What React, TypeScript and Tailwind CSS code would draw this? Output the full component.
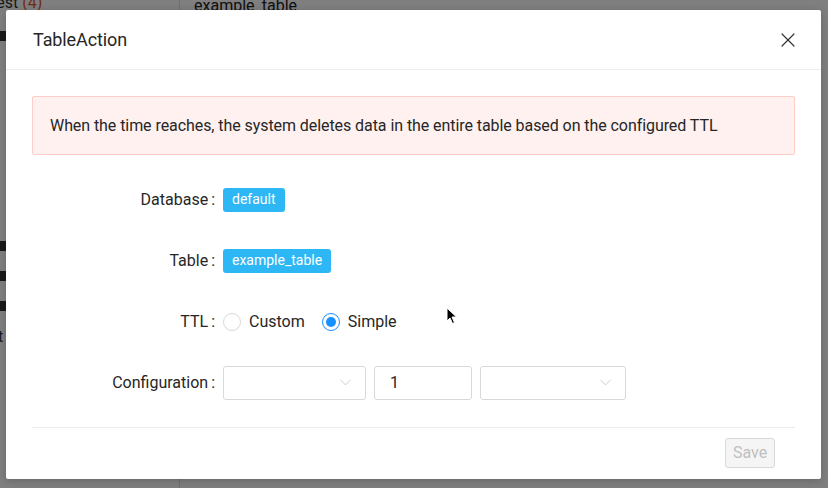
import React, { useState } from 'react';
import { X, ChevronDown } from 'lucide-react';

const font = { fontFamily: 'Roboto, "Liberation Sans", Arial, sans-serif' };

const FormRow: React.FC<{ label: string; children: React.ReactNode }> = ({ label, children }) => (
  <div className="flex items-center h-[61px]">
    <div className="w-[191px] shrink-0 flex justify-end pr-[8px] text-[16px] text-[#262626]">
      <span>{label}</span>
      <span className="ml-[3px]">:</span>
    </div>
    <div className="flex items-center">{children}</div>
  </div>
);

const Tag: React.FC<{ children: React.ReactNode }> = ({ children }) => (
  <span className="inline-flex items-center h-[24px] px-[9px] rounded-[3px] bg-[#2db7f5] text-white text-[14px]">
    {children}
  </span>
);

const Radio: React.FC<{ checked: boolean; label: string; onClick: () => void }> = ({ checked, label, onClick }) => (
  <label onClick={onClick} className="flex items-center mr-[17px] cursor-pointer">
    <span
      className={`w-[18px] h-[18px] rounded-full border flex items-center justify-center bg-white ${
        checked ? 'border-[#1890ff]' : 'border-[#d9d9d9]'
      }`}
    >
      {checked && <span className="w-[10px] h-[10px] rounded-full bg-[#1890ff]" />}
    </span>
    <span className="ml-[8px] text-[16px] text-[#262626]">{label}</span>
  </label>
);

const Select: React.FC<{ width: string }> = ({ width }) => (
  <div className={`${width} h-[34px] border border-[#d9d9d9] rounded-[3px] bg-white flex items-center justify-end pr-[10px]`}>
    <ChevronDown size={19} strokeWidth={1} className="text-[#bfbfbf]" />
  </div>
);

export default function App() {
  const [ttl, setTtl] = useState<'custom' | 'simple'>('simple');

  return (
    <div className="relative w-[828px] h-[488px] overflow-hidden bg-white" style={font}>
      {/* page behind the dialog */}
      <div className="absolute inset-0 flex">
        <div className="w-[180px] border-r border-[#e0e0e0]">
          <div className="text-[16px] text-[#333] -mt-[9px] -ml-[9px]">
            test <span className="text-[#e4572e]">(4)</span>
          </div>
          <div className="mt-[16px] w-[6px] h-[10px] bg-[#333]" />
          <div className="mt-[200px] w-[6px] h-[10px] bg-[#333]" />
          <div className="mt-[20px] w-[6px] h-[10px] bg-[#333]" />
          <div className="mt-[20px] w-[6px] h-[10px] bg-[#333]" />
          <div className="mt-[14px] text-[16px] text-[#333] -ml-[2px]">t</div>
        </div>
        <div className="pl-[14px] text-[16px] text-[#222] -mt-[6px]">example_table</div>
      </div>
      <div className="absolute inset-0 bg-black/50" />

      {/* dialog */}
      <div className="absolute left-[6px] top-[10px] w-[815px] h-[469px] bg-white rounded-[2px] shadow-[0_2px_8px_rgba(0,0,0,0.2)] flex flex-col">
        <div className="h-[60px] shrink-0 border-b border-[#ececec] flex items-center justify-between pl-[27px] pr-[21px]">
          <h2 className="text-[18px] text-[#262626] tracking-[-0.1px]">TableAction</h2>
          <X size={24} strokeWidth={1.2} className="text-[#333]" />
        </div>

        <div className="px-[26px] pt-[26px] flex-1 flex flex-col">
          <div className="h-[59px] border border-[#ffccc7] bg-[#fff1f0] rounded-[2px] flex items-center pl-[17px] text-[16px] text-[#262626] tracking-[-0.07px]">
            When the time reaches, the system deletes data in the entire table based on the configured TTL
          </div>

          <div className="mt-[14px]">
            <FormRow label="Database">
              <Tag>default</Tag>
            </FormRow>
            <FormRow label="Table">
              <Tag>example_table</Tag>
            </FormRow>
            <FormRow label="TTL">
              <Radio checked={ttl === 'custom'} label="Custom" onClick={() => setTtl('custom')} />
              <Radio checked={ttl === 'simple'} label="Simple" onClick={() => setTtl('simple')} />
            </FormRow>
            <FormRow label="Configuration">
              <div className="flex items-center gap-[8px]">
                <Select width="w-[143px]" />
                <div className="w-[98px] h-[34px] border border-[#d9d9d9] rounded-[3px] bg-white flex items-center pl-[15px] text-[16px] text-[#262626]">
                  1
                </div>
                <Select width="w-[146px]" />
              </div>
            </FormRow>
          </div>

          <div className="mt-[14px] border-t border-[#ececec] flex justify-end pt-[10px] pr-[20px]">
            <button
              disabled
              className="w-[50px] h-[30px] border border-[#d9d9d9] bg-[#f5f5f5] rounded-[3px] text-[16px] text-[#bfbfbf]"
            >
              Save
            </button>
          </div>
        </div>
      </div>

      {/* mouse pointer */}
      <svg className="absolute left-[446px] top-[307px]" width="12" height="18" viewBox="0 0 12 18">
        <path d="M1 1 L1 14 L4 11 L6.5 16.5 L8.5 15.5 L6 10 L10.5 10 Z" fill="#000" stroke="#fff" strokeWidth="1" />
      </svg>
    </div>
  );
}
